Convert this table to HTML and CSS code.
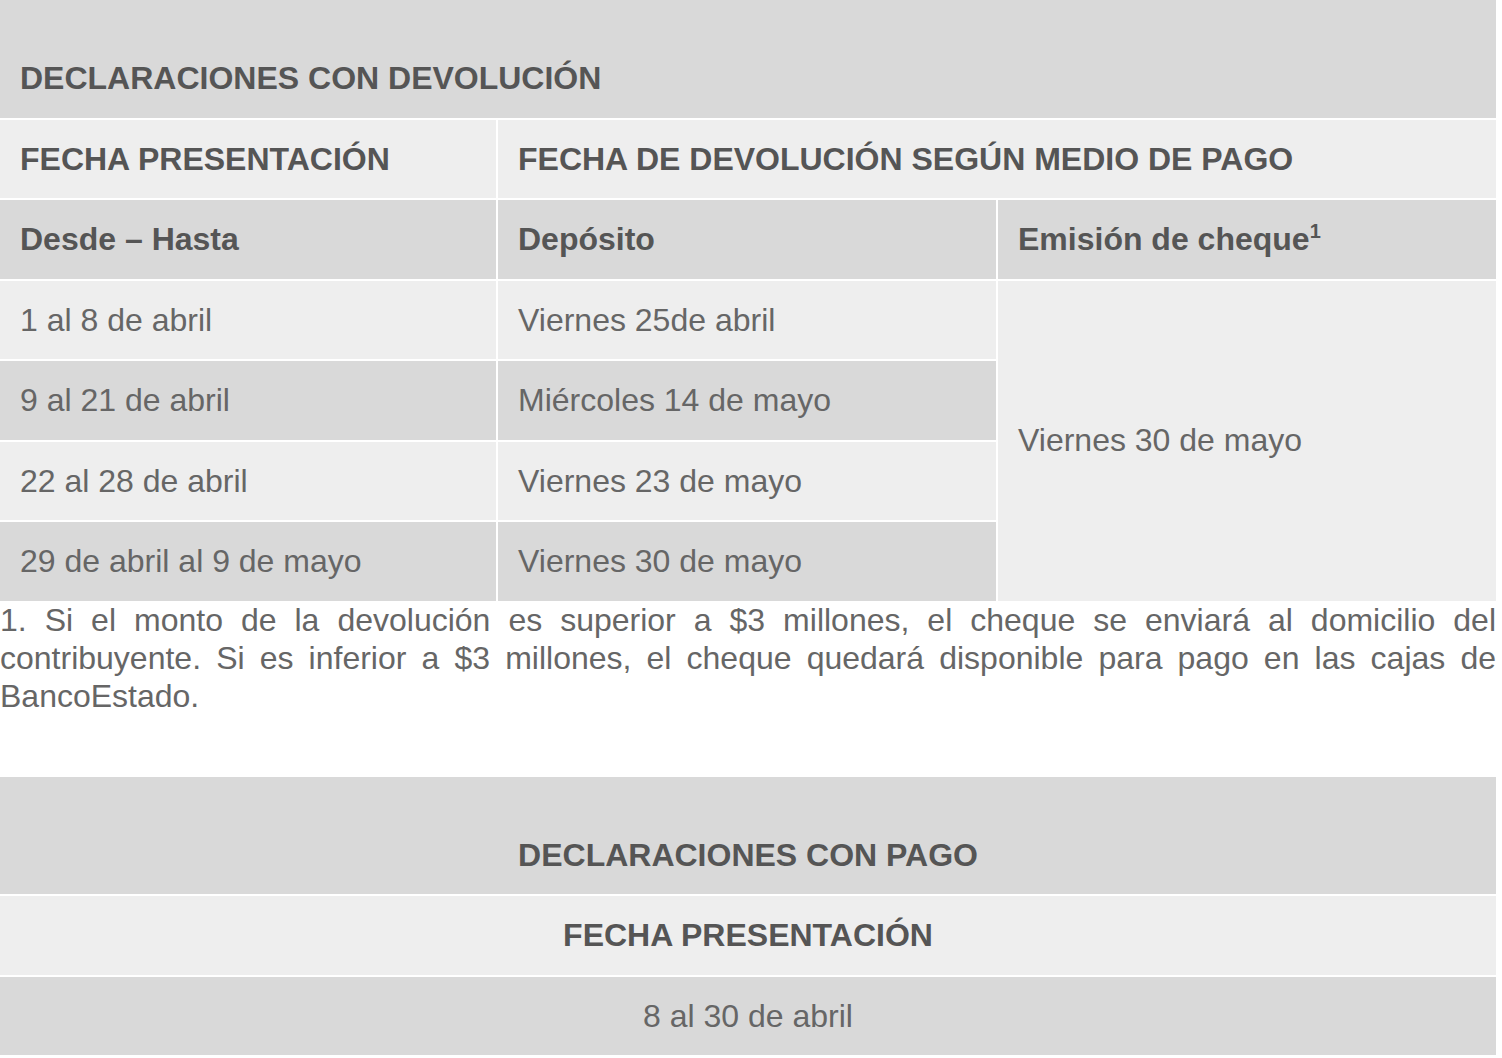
FILE: index.html
```html
<!DOCTYPE html>
<html lang="es">
<head>
<meta charset="utf-8">
<title>Declaraciones</title>
<link rel="stylesheet" href="styles.css">
</head>
<body>
<div class="page">
  <table class="grid">
    <colgroup><col class="col-a"><col class="col-b"><col class="col-c"></colgroup>
    <tbody>
      <tr class="dark">
        <th colspan="3" class="title">DECLARACIONES CON DEVOLUCIÓN</th>
      </tr>
      <tr class="light">
        <th>FECHA PRESENTACIÓN</th>
        <th colspan="2">FECHA DE DEVOLUCIÓN SEGÚN MEDIO DE PAGO</th>
      </tr>
      <tr class="dark">
        <th>Desde – Hasta</th>
        <th>Depósito</th>
        <th>Emisión de cheque<sup>1</sup></th>
      </tr>
      <tr class="light">
        <td>1 al 8 de abril</td>
        <td>Viernes 25de abril</td>
        <td rowspan="4" class="light-cell">Viernes 30 de mayo</td>
      </tr>
      <tr class="dark">
        <td>9 al 21 de abril</td>
        <td>Miércoles 14 de mayo</td>
      </tr>
      <tr class="light">
        <td>22 al 28 de abril</td>
        <td>Viernes 23 de mayo</td>
      </tr>
      <tr class="dark">
        <td>29 de abril al 9 de mayo</td>
        <td>Viernes 30 de mayo</td>
      </tr>
    </tbody>
  </table>
  <p class="note">1. Si el monto de la devolución es superior a $3 millones, el cheque se enviará al domicilio del contribuyente. Si es inferior a $3 millones, el cheque quedará disponible para pago en las cajas de BancoEstado.</p>

  <table class="grid centered">
    <tbody>
      <tr class="dark">
        <th class="title">DECLARACIONES CON PAGO</th>
      </tr>
      <tr class="light">
        <th>FECHA PRESENTACIÓN</th>
      </tr>
      <tr class="dark">
        <td>8 al 30 de abril</td>
      </tr>
    </tbody>
  </table>
</div>
</body>
</html>
```
FILE: styles.css
```css
html, body {
  margin: 0;
  padding: 0;
  background: #ffffff;
}

body {
  font-family: "Liberation Sans", Arial, Helvetica, sans-serif;
  font-size: 32px;
  line-height: 38px;
  color: #666666;
}

.page {
  width: 1496px;
}

.grid {
  width: 1496px;
  table-layout: fixed;
  border-collapse: collapse;
  border-style: hidden;
}

.col-a {
  width: 497px;
}

.col-b {
  width: 500px;
}

.col-c {
  width: 499px;
}

.grid th,
.grid td {
  border: 2px solid #ffffff;
  padding: 20px 20px 20.5px 20px;
  text-align: left;
  vertical-align: middle;
  font-size: 32px;
  line-height: 38px;
}

.grid th {
  font-weight: bold;
  color: #555555;
}

.grid td {
  font-weight: normal;
  color: #666666;
}

.grid .title {
  padding-top: 59px;
}

.dark > th,
.dark > td {
  background: #d9d9d9;
}

.light > th,
.light > td,
.grid .light-cell {
  background: #eeeeee;
}

.grid sup {
  font-size: 20px;
  line-height: 0;
  vertical-align: 12px;
}

.centered th,
.centered td {
  text-align: center;
}

.note {
  margin: 0 0 62px 0;
  font-size: 32px;
  line-height: 38px;
  text-align: justify;
  color: #666666;
}
```
